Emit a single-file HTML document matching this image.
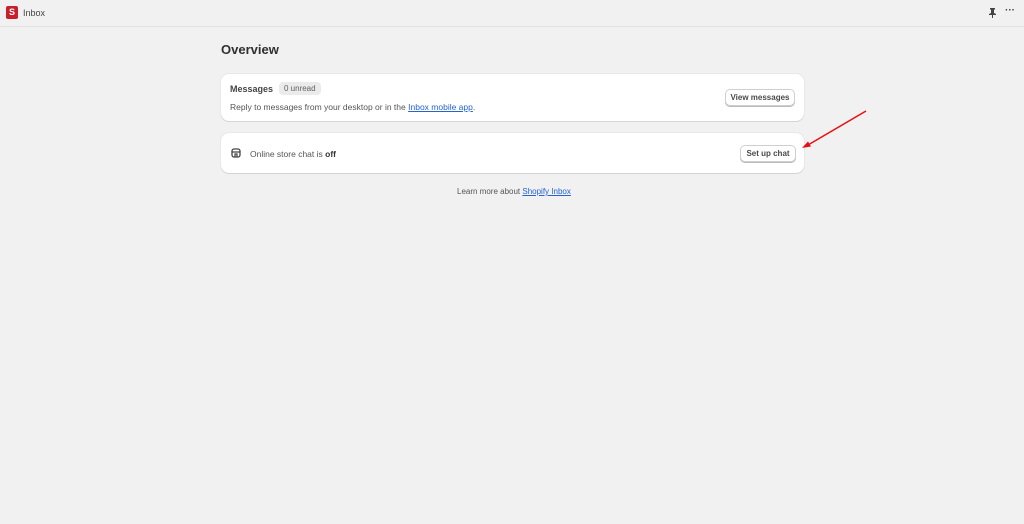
<!DOCTYPE html>
<html><head><style>
body{margin:0;width:1024px;height:524px;background:#f1f1f1;font-family:"Liberation Sans",sans-serif;color:#303030;position:relative;overflow:hidden}
.hdr{position:absolute;left:0;top:0;width:1024px;height:26px;border-bottom:1px solid #e3e3e3;background:#f1f1f1}
.logo{position:absolute;left:6px;top:6px;width:12px;height:13px;background:#c8202a;border-radius:2px;color:#fff;font-size:9px;font-weight:bold;text-align:center;line-height:13px}
.t{position:absolute;font-size:9px}
.card{position:absolute;left:221px;width:583px;background:#fff;border-radius:8px;box-shadow:0 1px 0 #d4d4d4,0 0 0 1px #e8e8e8}
.btn{position:absolute;border:1px solid #cfcfcf;border-radius:5px;background:#fff;font-size:8px;font-weight:bold;color:#4a4a4a;text-align:center;box-shadow:0 1px 0 #bbb}
a{color:#2463d1;text-decoration:underline}
</style></head><body>
<div class="hdr">
<div class="logo">S</div>
<div class="t" style="left:23px;top:8px;color:#444">Inbox</div>
<svg style="position:absolute;left:988px;top:8px" width="9" height="10" viewBox="0 0 9 10"><path d="M2 0h5v1l-1 1v3l2 1v1H1V6l2-1V2L2 1z" fill="#444"/><rect x="4" y="7" width="1" height="3" fill="#444"/></svg>
<div class="t" style="left:1005px;top:5px;font-size:10px;font-weight:bold;color:#444">···</div>
</div>
<div class="t" style="left:221px;top:42px;font-size:13px;font-weight:bold;color:#303030">Overview</div>
<div class="card" style="top:74px;height:47px">
<div class="t" style="left:9px;top:10px;font-weight:bold;font-size:9px;color:#444">Messages</div>
<div class="t" style="left:58px;top:8px;background:#ebebeb;border-radius:4px;padding:2px 5px;font-size:8px;color:#616161">0 unread</div>
<div class="t" style="left:9px;top:28px;font-size:8.5px;color:#555">Reply to messages from your desktop or in the <a>Inbox mobile app</a>.</div>
<div class="btn" style="left:504px;top:15px;width:68px;height:15px;line-height:15px">View messages</div>
</div>
<div class="card" style="top:133px;height:40px">
<svg style="position:absolute;left:10px;top:15px" width="10" height="10" viewBox="0 0 10 10"><rect x="1" y="1" width="8" height="8" rx="2" fill="none" stroke="#444" stroke-width="1.3"/><path d="M1 4h8M4 9V6h2v3" stroke="#444" stroke-width="1.2" fill="none"/></svg>
<div class="t" style="left:29px;top:16px;font-size:8.5px;color:#555">Online store chat is <b style="color:#333">off</b></div>
<div class="btn" style="left:519px;top:12px;width:54px;height:15px;line-height:15px">Set up chat</div>
</div>
<div class="t" style="left:457px;top:187px;font-size:8px;color:#555">Learn more about <a>Shopify Inbox</a></div>
<svg style="position:absolute;left:0;top:0" width="1024" height="524"><line x1="866" y1="111" x2="808" y2="145" stroke="#e81010" stroke-width="1.5"/><path d="M802 148l9-1.5-3-5z" fill="#e81010"/></svg>
</body></html>
